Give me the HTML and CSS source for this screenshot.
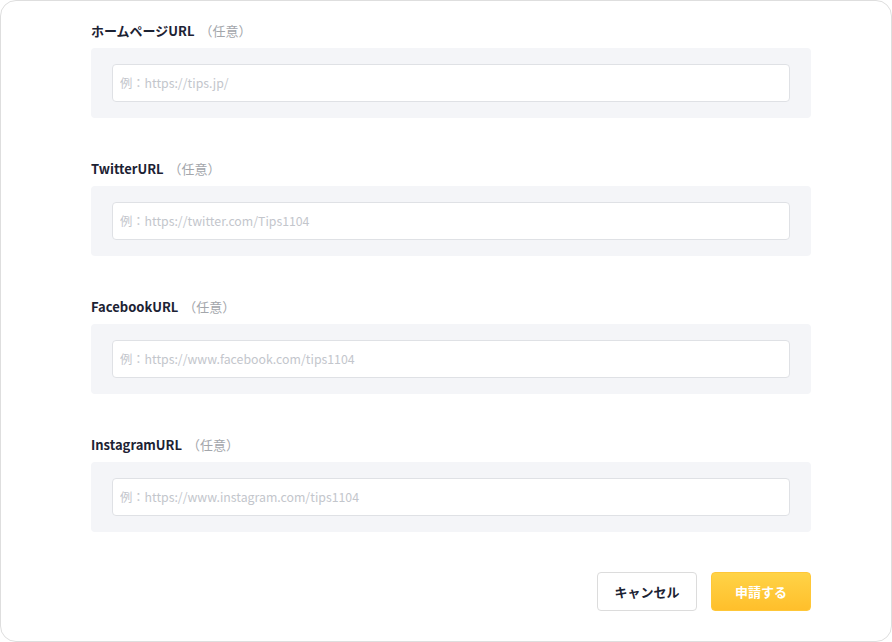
FILE: index.html
```html
<!DOCTYPE html>
<html>
<head>
<meta charset="utf-8">
<link rel="stylesheet" href="styles.css">
</head>
<body>
<div class="card">
  <div class="field">
    <label class="field-label" for="homepage">ホームページURL <span class="optional">（任意）</span></label>
    <div class="field-box">
      <input class="field-input" type="text" id="homepage" placeholder="例：https://tips.jp/">
    </div>
  </div>
  <div class="field">
    <label class="field-label" for="twitter">TwitterURL <span class="optional">（任意）</span></label>
    <div class="field-box">
      <input class="field-input" type="text" id="twitter" placeholder="例：https://twitter.com/Tips1104">
    </div>
  </div>
  <div class="field">
    <label class="field-label" for="facebook">FacebookURL <span class="optional">（任意）</span></label>
    <div class="field-box">
      <input class="field-input" type="text" id="facebook" placeholder="例：https://www.facebook.com/tips1104">
    </div>
  </div>
  <div class="field">
    <label class="field-label" for="instagram">InstagramURL <span class="optional">（任意）</span></label>
    <div class="field-box">
      <input class="field-input" type="text" id="instagram" placeholder="例：https://www.instagram.com/tips1104">
    </div>
  </div>
  <div class="actions">
    <button class="btn btn-cancel">キャンセル</button>
    <button class="btn btn-submit">申請する</button>
  </div>
</div>
</body>
</html>
```

FILE: styles.css
```css
html, body {
	margin: 0;
	background: #fff;
}

.card {
	box-sizing: border-box;
	width: 892px;
	height: 642px;
	border: 1px solid #dedede;
	border-radius: 16px;
	padding: 20px 80px 0 90px;
	font-family: "Noto Sans CJK JP", "Noto Sans", sans-serif;
	overflow: hidden;
}

.field {
	margin-bottom: 41px;
}

.field-label {
	display: block;
	height: 20px;
	line-height: 20px;
	font-size: 13px;
	font-weight: bold;
	color: #1c2233;
	margin-bottom: 7px;
}

.optional {
	font-weight: normal;
	color: #a3a6ab;
	margin-left: 2px;
}

.field-box {
	background: #f4f5f8;
	border-radius: 4px;
	padding: 16px 21px;
}

.field-input {
	box-sizing: border-box;
	display: block;
	width: 100%;
	height: 38px;
	border: 1px solid #dfe1e5;
	border-radius: 4px;
	background: #fff;
	padding: 0 7px;
	font-family: "Noto Sans CJK JP", "Noto Sans", sans-serif;
	font-size: 12.3px;
	color: #333;
}

.field-input::placeholder {
	color: #c3c6cc;
}

.actions {
	display: flex;
	justify-content: flex-end;
	gap: 14px;
	margin-top: -1px;
}

.btn {
	box-sizing: border-box;
	width: 100px;
	height: 39px;
	border-radius: 4px;
	font-family: "Noto Sans CJK JP", "Noto Sans", sans-serif;
	font-size: 13px;
	font-weight: bold;
	cursor: pointer;
}

.btn-cancel {
	background: #fff;
	border: 1px solid #dcdcdc;
	color: #1c2233;
}

.btn-submit {
	background: linear-gradient(#ffd347, #ffbf2b);
	border: 1px solid #ffc738;
	color: #fff;
}
```
